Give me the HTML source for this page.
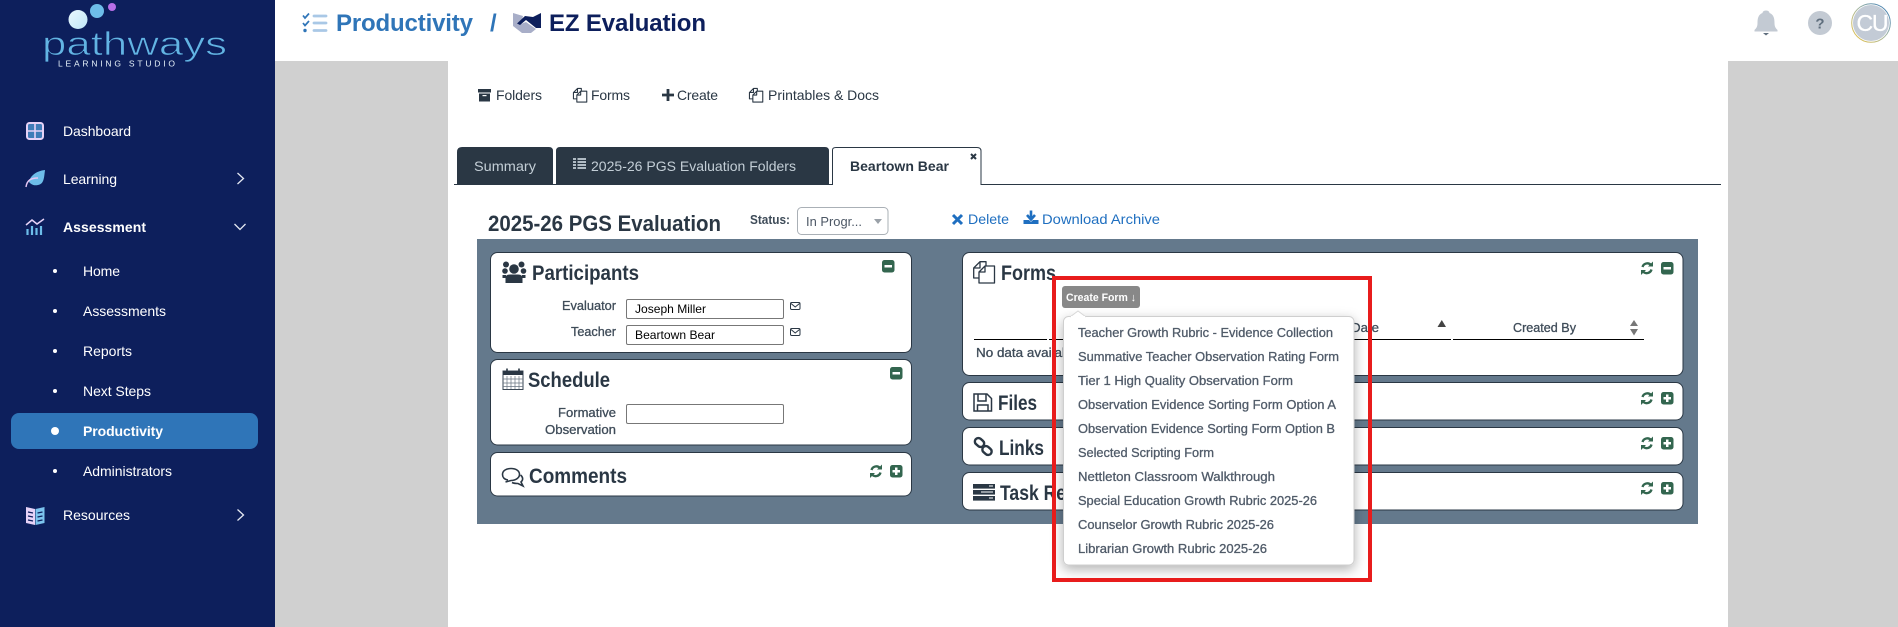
<!DOCTYPE html>
<html lang="en"><head><meta charset="utf-8"><title>EZ Evaluation</title>
<style>
html,body{margin:0;padding:0;width:1898px;height:627px;overflow:hidden;background:#fff}
svg{display:block}
text{font-family:"Liberation Sans",Arial,sans-serif}
.s{fill:#fff;font-size:14px}
.h{fill:#2a3744;font-weight:700;font-size:21px}
.l{fill:#3f4c59;font-size:13px;stroke:#3f4c59;stroke-width:.3}
.m{fill:#505b69;font-size:13px;stroke:#505b69;stroke-width:.3}
.n{fill:#2a3744;font-size:14px}
.card{fill:#fff;stroke:#2a3744;stroke-width:1}
.inp{fill:#fff;stroke:#777;stroke-width:1}
</style></head><body>
<svg width="1898" height="627" viewBox="0 0 1898 627" xmlns="http://www.w3.org/2000/svg">
<defs>
<filter id="sh" x="-15%" y="-15%" width="130%" height="130%"><feDropShadow dx="0" dy="4" stdDeviation="6" flood-color="#000" flood-opacity=".3"/></filter>
<linearGradient id="ball" x1="0" y1="0" x2="1" y2="1"><stop offset="0" stop-color="#eaf8fe"/><stop offset="1" stop-color="#bfe6f8"/></linearGradient>
<linearGradient id="ring" x1="0" y1="1" x2="1" y2="0"><stop offset="0" stop-color="#e8c040"/><stop offset=".5" stop-color="#a9b9a0"/><stop offset="1" stop-color="#2f75b8"/></linearGradient>
<g id="pages" fill="none" stroke-linejoin="round"><path d="M6 17 H.7 V7 L7 .7 H13 V5 M.7 7 H7 V.7"/><path d="M6 11 L12 5 H21.5 V22 H6 Z M6 11 H12 V5"/></g>
<g id="ref" fill="none" stroke="#33664f" stroke-width="2.4"><path d="M1.5 5 A5 5 0 0 1 10 3"/><path d="M10.5 7.5 A5 5 0 0 1 2 9.5"/><path d="M7 4.5 H12 V-.5 Z" fill="#33664f" stroke="none"/><path d="M5 8 H0 V13 Z" fill="#33664f" stroke="none"/></g>
<g id="minus"><rect width="12.5" height="12.5" rx="2.5" fill="#33664f"/><rect x="2.5" y="5" width="7.5" height="2.5" fill="#fff"/></g>
<g id="plus"><rect width="12.5" height="12.5" rx="2.5" fill="#33664f"/><path d="M2.5 6.25 H10 M6.25 2.5 V10" stroke="#fff" stroke-width="2.5"/></g>
<g id="env" fill="none" stroke="#2a3744" stroke-width="1"><rect x=".5" y=".5" width="9.5" height="7" rx="1.2"/><path d="M1 1.5 L5.2 5 L9.5 1.5"/></g>
</defs>

<!-- page bg -->
<rect x="275" y="61" width="173" height="566" fill="#d0d0d0"/>
<rect x="1728" y="61" width="170" height="566" fill="#d0d0d0"/>

<!-- sidebar -->
<rect width="275" height="627" fill="#0d1f5c"/>
<circle cx="78" cy="19.5" r="9.5" fill="url(#ball)"/>
<circle cx="97" cy="11" r="7" fill="#6dbde9"/>
<circle cx="112" cy="7" r="4" fill="#b86fe8"/>
<text x="42" y="55" font-size="33" textLength="185" lengthAdjust="spacingAndGlyphs" fill="#62b4e3" stroke="#0d1f5c" stroke-width=".8">pathways</text>
<text x="58" y="66.5" font-size="8.5" textLength="117" fill="#e6f2fa">LEARNING STUDIO</text>

<!-- nav icons -->
<rect x="27" y="123" width="16" height="16" rx="2.5" fill="#3f7cb8" stroke="#e6d2f7" stroke-width="2"/>
<path d="M35 123 V139 M27 131 H43" stroke="#e6d2f7" stroke-width="1.6"/>
<path d="M45 170 C44 178 44 184 38 185 C33 186 31 184 29 182 C30 176 36 171 45 170 Z" fill="#6dbde9"/>
<path d="M26 187 C27 180 31 178 38 178" fill="none" stroke="#e6c7f5" stroke-width="1.4"/>
<path d="M26 225 L32 220 L37 224 L44 219" fill="none" stroke="#e6d2f7" stroke-width="1.5"/>
<path d="M27.5 229 V235 M32 226 V235 M36.5 228 V235 M41 226 V235" stroke="#6dbde9" stroke-width="2.2" fill="none"/>
<path d="M26 507 L35 509 V525 L26 523 Z" fill="#e6d2f7"/>
<path d="M44.5 507 L35.5 509 V525 L44.5 523 Z" fill="#7cc4ee"/>
<path d="M28 512 L33 513 M28 516 L33 517 M28 520 L33 521 M37.5 513 L42.5 512 M37.5 517 L42.5 516 M37.5 521 L42.5 520" stroke="#0d1f5c" stroke-width="1.2"/>

<text class="s" x="63" y="136" textLength="68">Dashboard</text>
<text class="s" x="63" y="184" textLength="54">Learning</text>
<text class="s" x="63" y="232" textLength="83" font-weight="700">Assessment</text>
<text class="s" x="83" y="276" textLength="37">Home</text>
<text class="s" x="83" y="316" textLength="83">Assessments</text>
<text class="s" x="83" y="356" textLength="49">Reports</text>
<text class="s" x="83" y="396" textLength="68">Next Steps</text>
<rect x="11" y="413" width="247" height="36" rx="8" fill="#2f75b8"/>
<text class="s" x="83" y="436" textLength="80" font-weight="700">Productivity</text>
<text class="s" x="83" y="476" textLength="89">Administrators</text>
<text class="s" x="63" y="520" textLength="67">Resources</text>
<circle cx="55" cy="271" r="2" fill="#fff"/>
<circle cx="55" cy="311" r="2" fill="#fff"/>
<circle cx="55" cy="351" r="2" fill="#fff"/>
<circle cx="55" cy="391" r="2" fill="#fff"/>
<circle cx="55" cy="431" r="4" fill="#fff"/>
<circle cx="55" cy="471" r="2" fill="#fff"/>
<path d="M237.5 173 L243.5 178.5 L237.5 184" fill="none" stroke="#e4e8f2" stroke-width="1.3"/>
<path d="M234.5 224 L240 229.5 L245.5 224" fill="none" stroke="#e4e8f2" stroke-width="1.3"/>
<path d="M237.5 509.5 L243.5 515 L237.5 520.5" fill="none" stroke="#e4e8f2" stroke-width="1.3"/>

<!-- header -->
<path d="M303 15.5 L305 18 L309 13.5 M303 23 L305 25.5 L309 21" fill="none" stroke="#2f75b8" stroke-width="1.7"/>
<circle cx="305" cy="30.5" r="1.7" fill="#2f75b8"/>
<path d="M314 16 H326 M314 23 H326 M314 30.5 H326" stroke="#a9c8e6" stroke-width="2.8" stroke-linecap="round"/>
<text x="336" y="31" font-size="24" font-weight="700" fill="#2f75b8" textLength="137">Productivity</text>
<text x="490" y="31" font-size="24" font-weight="700" fill="#2f75b8" textLength="7">/</text>
<path d="M513 13 L523 16 L521 24 L526 22 L536 29 L531 33 H522 L513 26 Z" fill="#a8aec8"/>
<path d="M541 13 V28 L536 28 L526 20 L520 25 L517 23.5 L525 16 L533 17 Z" fill="#0d1f5c"/>
<text x="549" y="31" font-size="24" font-weight="700" fill="#0d1f5c" textLength="157">EZ Evaluation</text>

<path d="M1766 10.5 C1768.5 10.5 1769.5 12 1769.5 13 C1773.5 14.5 1774.5 18 1774.5 23 C1774.5 27 1776 28.5 1777.5 30 V31.5 H1754.5 V30 C1756 28.5 1757.5 27 1757.5 23 C1757.5 18 1758.5 14.5 1762.5 13 C1762.5 12 1763.5 10.5 1766 10.5 Z" fill="#c3cad3"/>
<path d="M1763 33 H1769 L1766 35.5 Z" fill="#5f6e7d"/>
<circle cx="1820" cy="23" r="12" fill="#c3cad3"/>
<text x="1820" y="28.5" font-size="15" font-weight="700" text-anchor="middle" fill="#5f6e7d">?</text>
<circle cx="1871" cy="23" r="19.3" fill="#fff" stroke="url(#ring)" stroke-width="1"/>
<circle cx="1871" cy="23" r="18" fill="#c3cbd6"/>
<text x="1856.5" y="31" font-size="23" fill="#fff" stroke="#fff" stroke-width=".3" textLength="32">CU</text>

<!-- top links -->
<rect x="478" y="89" width="13" height="3.5" fill="#2a3744"/>
<rect x="479" y="93.5" width="11" height="8" fill="#2a3744"/><rect x="482.5" y="95" width="4" height="1.2" fill="#fff"/>
<text class="n" x="496" y="100" textLength="46">Folders</text>
<use href="#pages" transform="translate(573 88) scale(.64)" stroke="#2a3744" stroke-width="1.7"/>
<text class="n" x="591" y="100" textLength="39">Forms</text>
<path d="M662 95 H674 M668 89 V101" stroke="#2a3744" stroke-width="2.8"/>
<text class="n" x="677" y="100" textLength="41">Create</text>
<use href="#pages" transform="translate(749 88) scale(.64)" stroke="#2a3744" stroke-width="1.7"/>
<text class="n" x="768" y="100" textLength="111">Printables &amp; Docs</text>

<!-- tabs -->
<path d="M454 184.5 H832 M981 184.5 H1721" stroke="#2a3744" stroke-width="1"/>
<path d="M457 184 V152 Q457 147 462 147 H549 Q553 147 553 151 V184 Z" fill="#2a3744"/>
<path d="M556 184 V151 Q556 147 560 147 H825 Q829 147 829 151 V184 Z" fill="#2a3744"/>
<path d="M832.5 185 V150 Q832.5 147.5 836 147.5 H977 Q981 147.5 981 151 V185" fill="#fff" stroke="#2a3744" stroke-width="1"/>
<text x="474" y="171" font-size="14" fill="#c3ced6" textLength="62" lengthAdjust="spacingAndGlyphs">Summary</text>
<path d="M573 159 H576 M577.5 159 H586 M573 162 H576 M577.5 162 H586 M573 165 H576 M577.5 165 H586 M573 168 H576 M577.5 168 H586" stroke="#c3ced6" stroke-width="1.8"/>
<text x="591" y="171" font-size="14" fill="#c3ced6" textLength="205" lengthAdjust="spacingAndGlyphs">2025-26 PGS Evaluation Folders</text>
<text x="850" y="171" font-size="14" font-weight="700" fill="#2a3744" textLength="99" lengthAdjust="spacingAndGlyphs">Beartown Bear</text>
<path d="M971 154 L976 159 M976 154 L971 159" stroke="#2a3744" stroke-width="2"/>

<!-- title row -->
<text x="488" y="231" font-size="22" font-weight="700" fill="#2a3744" textLength="233" lengthAdjust="spacingAndGlyphs">2025-26 PGS Evaluation</text>
<text x="750" y="224" font-size="12.5" font-weight="700" fill="#3f4c59" textLength="40" lengthAdjust="spacingAndGlyphs">Status:</text>
<rect x="797.5" y="207.5" width="90.5" height="27" rx="4" fill="#fff" stroke="#aab0b6"/>
<text x="806" y="226" font-size="13" fill="#4c5765" textLength="56" lengthAdjust="spacingAndGlyphs">In Progr...</text>
<path d="M874 219 H882 L878 224 Z" fill="#9aa1a8"/>
<path d="M953 215 L962 224 M962 215 L953 224" stroke="#1f6fc0" stroke-width="3"/>
<text x="968" y="224" font-size="14" fill="#1f6fc0" textLength="41" lengthAdjust="spacingAndGlyphs">Delete</text>
<path d="M1031 210.5 V218 M1027 215 L1031 219.5 L1035 215" fill="none" stroke="#1f6fc0" stroke-width="2.6"/>
<path d="M1023.5 220 H1029 L1031 222 L1033 220 H1038.5 V224 H1023.5 Z" fill="#1f6fc0"/>
<text x="1042" y="224" font-size="14" fill="#1f6fc0" textLength="118" lengthAdjust="spacingAndGlyphs">Download Archive</text>

<!-- panel -->
<rect x="477" y="239" width="1221" height="285" fill="#64798c"/>

<!-- left cards -->
<rect class="card" x="490.5" y="252.5" width="421" height="100" rx="7"/>
<rect class="card" x="490.5" y="359.5" width="421" height="85.5" rx="7"/>
<rect class="card" x="490.5" y="452.5" width="421" height="43.5" rx="7"/>

<circle cx="514" cy="269" r="4.8" fill="#2a3744"/><circle cx="506" cy="264.5" r="3" fill="#2a3744"/><circle cx="521.5" cy="264.5" r="3" fill="#2a3744"/><circle cx="505" cy="271" r="2.8" fill="#2a3744"/><circle cx="523.5" cy="271" r="2.8" fill="#2a3744"/>
<path d="M505.5 283 V278 Q505.5 274.5 510 274.5 H518 Q522.5 274.5 522.5 278 V283 Z" fill="#2a3744"/>
<path d="M502.5 275 H506 V278 H502.5 Z M522 275 H525.5 V278 H522 Z" fill="#2a3744"/>
<text class="h" x="532" y="280" textLength="107" lengthAdjust="spacingAndGlyphs">Participants</text>
<use href="#minus" x="882" y="260"/>
<text class="l" x="562" y="310" textLength="54" lengthAdjust="spacingAndGlyphs">Evaluator</text>
<text class="l" x="571" y="336" textLength="45" lengthAdjust="spacingAndGlyphs">Teacher</text>
<rect class="inp" x="626.5" y="299.5" width="157" height="19" rx="1.5"/>
<rect class="inp" x="626.5" y="325.5" width="157" height="19" rx="1.5"/>
<text x="635" y="313" font-size="12" fill="#000" textLength="71" lengthAdjust="spacingAndGlyphs">Joseph Miller</text>
<text x="635" y="339" font-size="12" fill="#000" textLength="80" lengthAdjust="spacingAndGlyphs">Beartown Bear</text>
<use href="#env" x="790" y="302"/>
<use href="#env" x="790" y="328"/>

<rect x="503" y="371" width="20" height="18.5" fill="none" stroke="#3a4754" stroke-width="1"/>
<rect x="503" y="371" width="20" height="4" fill="#2a3744"/>
<path d="M507 368.5 V373 M519 368.5 V373" stroke="#2a3744" stroke-width="1.6"/>
<path d="M503 379 H523 M503 383 H523 M503 386.5 H523 M507 376 V389 M511 376 V389 M515 376 V389 M519 376 V389" stroke="#6a7682" stroke-width=".7"/>
<text class="h" x="528" y="387" textLength="82" lengthAdjust="spacingAndGlyphs">Schedule</text>
<use href="#minus" x="890" y="367"/>
<text class="l" x="558" y="417" textLength="58" lengthAdjust="spacingAndGlyphs">Formative</text>
<text class="l" x="545" y="434" textLength="71" lengthAdjust="spacingAndGlyphs">Observation</text>
<rect class="inp" x="626.5" y="404.5" width="157" height="19" rx="1.5"/>

<path d="M508 480 C504 479.5 502.5 477 502.5 474.5 C502.5 470.5 506.5 468.5 511 468.5 C515.5 468.5 519.5 470.5 519.5 474.5 C519.5 477.5 516 480.5 511 480.5 L505.5 482" fill="none" stroke="#2a3744" stroke-width="1.6"/>
<path d="M520.5 475 C523 477 523.5 480 521 482 L523 486 L518 483.5 C516 483.5 514 483.5 512 482.5" fill="none" stroke="#2a3744" stroke-width="1.6"/>
<text class="h" x="529" y="483" textLength="98" lengthAdjust="spacingAndGlyphs">Comments</text>
<use href="#ref" x="870" y="465"/>
<use href="#plus" x="890" y="465"/>

<!-- right cards -->
<rect class="card" x="962.5" y="252.5" width="720.5" height="123" rx="7"/>
<rect class="card" x="962.5" y="382.5" width="720.5" height="37.5" rx="7"/>
<rect class="card" x="962.5" y="427.5" width="720.5" height="37.5" rx="7"/>
<rect class="card" x="962.5" y="472.5" width="720.5" height="37.5" rx="7"/>

<use href="#pages" x="973" y="261" stroke="#2a3744" stroke-width="1.3"/>
<text class="h" x="1001" y="280" textLength="55" lengthAdjust="spacingAndGlyphs">Forms</text>
<use href="#ref" x="1641" y="262"/><use href="#minus" x="1661" y="262"/>

<g fill="none" stroke="#2a3744" stroke-width="1.5"><path d="M974 394 H987 L991.5 398.5 V411 H974 Z"/><path d="M978 394 V401 H986 V394"/><path d="M977.5 411 V405 H988 V411"/></g>
<text class="h" x="998" y="410" textLength="39" lengthAdjust="spacingAndGlyphs">Files</text>
<use href="#ref" x="1641" y="392"/><use href="#plus" x="1661" y="392"/>

<g fill="none" stroke="#2a3744" stroke-width="2.4"><rect x="974.5" y="439" width="10" height="7" rx="3.5" transform="rotate(40 979.5 442.5)"/><rect x="982" y="447" width="10" height="7" rx="3.5" transform="rotate(40 987 450.5)"/></g>
<text class="h" x="999" y="455" textLength="45" lengthAdjust="spacingAndGlyphs">Links</text>
<use href="#ref" x="1641" y="437"/><use href="#plus" x="1661" y="437"/>

<rect x="973" y="484" width="22" height="4.6" fill="#2a3744"/><rect x="973" y="490" width="22" height="4.6" fill="#2a3744"/><rect x="973" y="496" width="22" height="4.6" fill="#2a3744"/>
<path d="M989 486 H993 M981 492 H993 M989 498 H993" stroke="#fff" stroke-width="1"/>
<text class="h" x="1000" y="500" textLength="110" lengthAdjust="spacingAndGlyphs">Task Reports</text>
<use href="#ref" x="1641" y="482"/><use href="#plus" x="1661" y="482"/>

<!-- table in forms -->
<path d="M974 339.5 H1047 M1049 339.5 H1451 M1453 339.5 H1644" stroke="#000" stroke-width="1"/>
<text class="l" x="1351" y="332" textLength="28" lengthAdjust="spacingAndGlyphs">Date</text>
<path d="M1437.5 327 H1446 L1441.8 320 Z" fill="#444"/>
<text class="l" x="1513" y="332" textLength="63" lengthAdjust="spacingAndGlyphs">Created By</text>
<path d="M1630 326 H1638 L1634 320 Z" fill="#777"/><path d="M1630 329 H1638 L1634 335.5 Z" fill="#777"/>
<text class="l" x="976" y="357" textLength="104" lengthAdjust="spacingAndGlyphs">No data available</text>

<!-- popup -->
<rect x="1063.5" y="316.5" width="290.5" height="248.5" rx="5" fill="#fff" stroke="#cfcfcf" filter="url(#sh)"/>
<path d="M1070 317 L1078 311 L1086 317" fill="#fff" stroke="#d8d8d8"/>
<rect x="1071" y="316" width="14" height="2" fill="#fff"/>
<rect x="1062" y="286" width="78" height="22" rx="3" fill="#888"/>
<text x="1066" y="301" font-size="11" font-weight="700" fill="#fff" textLength="70" lengthAdjust="spacingAndGlyphs">Create Form ↓</text>
<text class="m" x="1078" y="337" textLength="255" lengthAdjust="spacingAndGlyphs">Teacher Growth Rubric - Evidence Collection</text>
<text class="m" x="1078" y="361" textLength="261" lengthAdjust="spacingAndGlyphs">Summative Teacher Observation Rating Form</text>
<text class="m" x="1078" y="385" textLength="215" lengthAdjust="spacingAndGlyphs">Tier 1 High Quality Observation Form</text>
<text class="m" x="1078" y="409" textLength="258" lengthAdjust="spacingAndGlyphs">Observation Evidence Sorting Form Option A</text>
<text class="m" x="1078" y="433" textLength="257" lengthAdjust="spacingAndGlyphs">Observation Evidence Sorting Form Option B</text>
<text class="m" x="1078" y="457" textLength="136" lengthAdjust="spacingAndGlyphs">Selected Scripting Form</text>
<text class="m" x="1078" y="481" textLength="197" lengthAdjust="spacingAndGlyphs">Nettleton Classroom Walkthrough</text>
<text class="m" x="1078" y="505" textLength="239" lengthAdjust="spacingAndGlyphs">Special Education Growth Rubric 2025-26</text>
<text class="m" x="1078" y="529" textLength="196" lengthAdjust="spacingAndGlyphs">Counselor Growth Rubric 2025-26</text>
<text class="m" x="1078" y="553" textLength="189" lengthAdjust="spacingAndGlyphs">Librarian Growth Rubric 2025-26</text>

<!-- red annotation -->
<rect x="1054" y="278" width="316" height="302" fill="none" stroke="#e81c1c" stroke-width="4"/>
</svg>
</body></html>
